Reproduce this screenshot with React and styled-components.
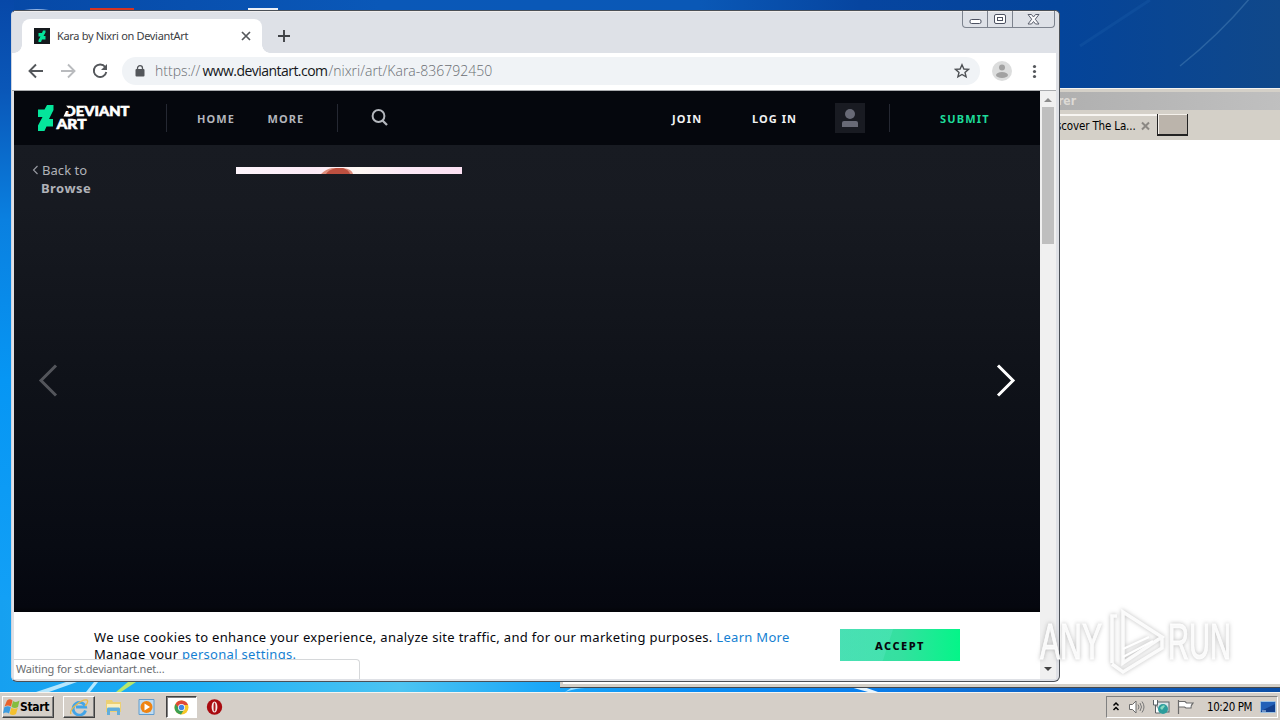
import React from 'react';
import styled, { createGlobalStyle } from 'styled-components';

const GlobalStyle = createGlobalStyle`
  * { box-sizing: border-box; }
  body { margin: 0; overflow: hidden; }
  svg { display: block; flex: none; }
`;

const uiFont = `'Noto Sans', 'Open Sans', sans-serif`;
const tahoma = `'DejaVu Sans Condensed', 'DejaVu Sans', sans-serif`;

/* ---------- desktop ---------- */

const Desktop = styled.div`
  position: relative;
  width: 1280px;
  height: 720px;
  overflow: hidden;
  font-family: ${uiFont};
  background:
    linear-gradient(90deg, #16a0f0 0, #1fb0f5 200px, #4cc4f2 400px, #1ca8f8 540px, #0a8cf4 700px, #0a80ee 860px, #0f62c4 1060px, #0b4ea6 1280px) 0 600px / 1280px 120px no-repeat,
    linear-gradient(180deg, #0748a8 0, #0a57b8 90px, #0a80e0 220px, #0696f4 380px, #12a0f6 600px) 0 0 / 14px 600px no-repeat,
    linear-gradient(90deg, #0648a6 0, #0a58b8 380px, #0a58b6 700px, #0645a0 860px, #04449a 1060px, #10488a 1280px);
`;

const Scenery = styled.svg`
  position: absolute;
  inset: 0;
`;

/* ---------- Internet Explorer window ---------- */

const IeWindow = styled.section`
  position: absolute;
  left: 560px;
  top: 88px;
  width: 724px;
  height: 600px;
  display: flex;
  flex-direction: column;
  background: #d4d0c8;
  border-top: 1px solid #f4f3f0;
  border-bottom: 1px solid #45484c;
`;

const IeTitle = styled.div`
  height: 18px;
  margin-top: 3px;
  padding-left: 498px;
  line-height: 18px;
  color: #dddad5;
  font: bold 12px/18px ${tahoma};
  background: linear-gradient(90deg, #a6a6a6, #b0b0b0 500px, #c0c0c0);
`;

const IeTabs = styled.div`
  display: flex;
  height: 30px;
  padding: 4px 0 0 340px;
  align-items: flex-start;
`;

const IeTab = styled.div`
  display: flex;
  align-items: center;
  width: 257px;
  height: 26px;
  padding: 0 0 4px 156px;
  border-top: 2px solid #f7f5f1;
  font: 11.5px ${tahoma};
  color: #000;
  gap: 6px;
  white-space: nowrap;
`;

const IeTabText = styled.span`
  width: 79px;
  letter-spacing: -0.15px;
`;

const IeNewTab = styled.div`
  width: 31px;
  height: 22px;
  border: 1px solid #222;
  border-top: 0;
  border-bottom-width: 2px;
  background: #bbb4ab;
  box-shadow: inset 1px 1px #f4f0ea;
`;

const IePage = styled.div`
  flex: 1;
  margin-bottom: 3px;
  background: #fff;
  border-left: 3px solid #d4d0c8;
`;

/* ---------- Chrome window ---------- */

const ChromeWindow = styled.section`
  position: absolute;
  left: 11px;
  top: 10px;
  width: 1049px;
  height: 672px;
  display: flex;
  flex-direction: column;
  padding: 0 3px 2px 2px;
  border: 1px solid #4b5057;
  border-left-color: #cdd3df;
  border-radius: 5px 5px 6px 6px;
  background: #dfe1e6;
  overflow: hidden;
`;

const TabStrip = styled.div`
  display: flex;
  flex: none;
  height: 42px;
  background: #dee1e7;
  box-shadow: inset 0 1px #f0eeee;
`;

const Tab = styled.div`
  position: relative;
  display: flex;
  align-items: center;
  width: 240px;
  height: 34px;
  margin: 8px 0 0 8px;
  padding: 0 11px 0 12px;
  border-radius: 8px 8px 0 0;
  background: #fff;
  &::before,
  &::after {
    content: '';
    position: absolute;
    bottom: 0;
    width: 8px;
    height: 8px;
  }
  &::before {
    left: -8px;
    background: radial-gradient(circle at 0 0, transparent 7.5px, #fff 8px);
  }
  &::after {
    right: -8px;
    background: radial-gradient(circle at 100% 0, transparent 7.5px, #fff 8px);
  }
`;

const TabTitle = styled.span`
  flex: 1;
  margin-left: 7px;
  font-size: 11px;
  line-height: 16px;
  letter-spacing: -0.32px;
  color: #3c4043;
  white-space: nowrap;
`;

const NewTab = styled.div`
  margin: 18px 0 0 15px;
`;

const WindowButtons = styled.div`
  display: flex;
  width: 93px;
  height: 17px;
  margin-left: auto;
  margin-right: 1px;
  border: 1px solid #7d838e;
  border-top: 0;
  border-radius: 0 0 4px 4px;
`;

const WindowButton = styled.div`
  display: flex;
  flex: ${(p) => p.$grow};
  align-items: center;
  justify-content: center;
  & + & { border-left: 1px solid #7d838e; }
`;

const Toolbar = styled.div`
  display: flex;
  flex: none;
  align-items: center;
  height: 38px;
  margin-left: -2px;
  padding: 0 12px 2px 15px;
  border-bottom: 1px solid #a9abae;
  background: #fff;
`;

const ToolbarIcon = styled.div`
  width: 18px;
  margin-right: ${(p) => p.$gap || 0}px;
`;

const Omnibox = styled.div`
  display: flex;
  align-items: center;
  width: 858px;
  height: 28px;
  padding: 0 10px 0 13px;
  border-radius: 14px;
  background: #f0f3f6;
`;

const Url = styled.span`
  flex: 1;
  margin-left: 10px;
  font: 300 14px 'Open Sans', ${uiFont};
  letter-spacing: 0;
  color: #6a6e73;
  white-space: nowrap;
`;

const Host = styled.span`
  margin: 0 1px 0 2px;
  color: #15171a;
  font-weight: 400;
  letter-spacing: -0.54px;
`;

const Avatar = styled.div`
  margin: 0 19px 0 12px;
`;

const Viewport = styled.div`
  position: relative;
  display: flex;
  flex: 1;
  min-height: 0;
`;

const Page = styled.main`
  display: flex;
  flex-direction: column;
  width: 1026px;
`;

const Scrollbar = styled.div`
  display: flex;
  flex-direction: column;
  align-items: center;
  width: 16px;
  padding: 6px 0 7px;
  background: #f0f0f0;
`;

const Thumb = styled.div`
  width: 12px;
  height: 137px;
  margin: 4px 0 auto;
  background: #bfbfbf;
`;

/* ---------- DeviantArt page ---------- */

const SiteHeader = styled.header`
  display: flex;
  flex: none;
  align-items: center;
  height: 54px;
  padding: 0 0 0 23px;
  background: #05070d;
`;

const Logo = styled.div`
  display: flex;
  width: 129px;
`;

const Divider = styled.i`
  width: 1px;
  height: 28px;
  margin-right: ${(p) => p.$after}px;
  background: #252832;
`;

const NavLink = styled.span`
  width: ${(p) => p.$w}px;
  padding-top: 1px;
  font-size: 11px;
  font-weight: 700;
  letter-spacing: ${(p) => p.$track || 1.1}px;
  color: ${(p) => p.$color || '#b3b5bb'};
  white-space: nowrap;
`;

const SearchIcon = styled.div`
  width: 301px;
  padding-bottom: 1px;
`;

const UserBox = styled.div`
  display: flex;
  align-items: center;
  justify-content: center;
  width: 30px;
  height: 30px;
  margin: 0 24px 0 0;
  background: #191b22;
`;

const Stage = styled.div`
  display: grid;
  grid-template-columns: 222px 1fr;
  grid-template-rows: 22px 1fr;
  flex: none;
  height: 467px;
  padding: 0 24px;
  background: linear-gradient(180deg, #181b22 0, #171a21 60px, #0f1219 235px, #080b13 400px, #05070f 462px, #030408 467px);
`;

const SideColumn = styled.div`
  grid-row: 1 / 3;
  display: flex;
  flex-direction: column;
  justify-content: space-between;
  padding: 16px 0 215px;
`;

const BackLink = styled.div`
  display: grid;
  grid-template-columns: 10px auto;
  margin-left: -6px;
  font-size: 13px;
  line-height: 18px;
  letter-spacing: 0.05px;
  color: #b0b2b8;
  b { grid-column: 2; margin-left: -1px; letter-spacing: 0.45px; }
`;

const BackChevron = styled.div`
  padding-top: 4px;
`;

const Artwork = styled.div`
  grid-column: 2;
  grid-row: 2;
  display: flex;
  justify-content: space-between;
  margin-left: -24px;
`;

const ArtStrip = styled.div`
  width: 226px;
  height: 7px;
  background: linear-gradient(90deg, #fdf4fb, #fbe9f5 35%, #fff8f4 55%, #fbe8f6 75%, #fbe0f2);
`;

const NextArrow = styled.div`
  padding-top: 196px;
`;

const CookieBar = styled.div`
  display: flex;
  flex: 1;
  padding: 17px 80px 0;
  background: #fff;
`;

const CookieText = styled.p`
  width: 746px;
  margin: 0;
  font-size: 13px;
  line-height: 17px;
  letter-spacing: 0.3px;
  color: #06070d;
  white-space: nowrap;
`;

const CookieLink = styled.span`
  color: #157fd2;
`;

const AcceptButton = styled.div`
  width: 120px;
  height: 32px;
  color: #06070d;
  font-size: 11px;
  font-weight: 800;
  letter-spacing: 1.5px;
  line-height: 34px;
  text-align: center;
  background:
    linear-gradient(108deg, rgba(100, 232, 205, 0.3) 0, rgba(100, 232, 205, 0.3) 50px, transparent 51px),
    linear-gradient(90deg, #3ddca8, #35e0a0 50%, #04f588);
`;

const StatusBubble = styled.div`
  position: absolute;
  left: 0;
  bottom: 0;
  width: 346px;
  height: 20px;
  padding-left: 2px;
  border: 1px solid #d6d8da;
  border-width: 1px 1px 0 0;
  border-radius: 0 4px 0 0;
  background: #fff;
  color: #6b6e72;
  font-size: 11px;
  letter-spacing: -0.17px;
  line-height: 18px;
`;

/* ---------- taskbar ---------- */

const Taskbar = styled.footer`
  position: absolute;
  left: 0;
  right: 0;
  bottom: 0;
  display: flex;
  align-items: flex-start;
  height: 28px;
  padding: 3px 2px 0 2px;
  border-top: 1px solid #f6f4f0;
  background: #d5cfc8;
`;

const TaskButton = styled.div`
  display: flex;
  align-items: center;
  justify-content: ${(p) => (p.$start ? 'flex-start' : 'center')};
  width: ${(p) => p.$w}px;
  height: 22px;
  margin-right: ${(p) => p.$gap || 0}px;
  border: 1px solid;
  border-color: ${(p) => (p.$pressed ? '#404040 #fff #fff #404040' : '#fff #404040 #404040 #fff')};
  box-shadow: ${(p) => (p.$pressed ? 'inset 1px 1px #808080' : 'inset -1px -1px #808080')};
  background: ${(p) => (p.$pressed ? '#fff' : 'transparent')};
  font: bold 12px ${tahoma};
  letter-spacing: -0.35px;
`;

const QuickIcon = styled.div`
  width: 18px;
  margin: 2px ${(p) => p.$gap}px 0 0;
`;

const Tray = styled.div`
  display: flex;
  align-items: center;
  width: 172px;
  height: 22px;
  margin-left: auto;
  padding: 0 1px 0 5px;
  border: 1px solid;
  border-color: #808080 #fff #fff #808080;
  gap: 7px;
`;

const Clock = styled.span`
  flex: 1;
  padding-left: 6px;
  font: 11.5px ${tahoma};
  letter-spacing: -0.4px;
  white-space: nowrap;
`;

const Watermark = styled.svg`
  position: absolute;
  left: 1034px;
  top: 604px;
  filter: drop-shadow(0 0 2px rgba(110, 110, 110, 0.5));
`;

/* ---------- drawings ---------- */

const SiteLogo = () => (
  <svg width="100" height="28" viewBox="0 0 100 28">
    <path fill="#05e59b" d="M16.500 1h-6.500L7.500 5.500H1V13h4.500L1 21.500V27h6.500l2-4.500H16V15h-4l4.500-9z" />
    <g fill="#fff" stroke="#fff" strokeWidth=".6" fontFamily="Lato, sans-serif" fontWeight="900" fontSize="14">
      <text x="27.500" y="12.300" textLength="65" lengthAdjust="spacingAndGlyphs">DEVIANT</text>
      <text x="19.500" y="25.200" textLength="30" lengthAdjust="spacingAndGlyphs">ART</text>
    </g>
    <path fill="#05070d" d="M25 0h3l4.500 6-3 4.500L28 14h-3l1-4z" />
    <path fill="#fff" d="M26.500 12.500l2.500-5.500h2.500l-1.500 3h3v2.500z" />
  </svg>
);

const Arrow = ({ flip, color }) => (
  <svg width="18" height="18" viewBox="0 0 18 18" transform={flip ? 'scale(-1 1)' : undefined}>
    <path d="M16 9H3M9 2.5 2.5 9 9 15.500" fill="none" stroke={color} strokeWidth="1.9" />
  </svg>
);

const PageArrow = ({ color, right }) => (
  <svg width="20" height="34" viewBox="0 0 20 34">
    <path d={right ? 'M2 2.500l15 15-15 15' : 'M18 2.500l-15 15 15 15'} fill="none" stroke={color} strokeWidth="3" />
  </svg>
);

function InternetExplorer() {
  return (
    <IeWindow>
      <IeTitle>rer</IeTitle>
      <IeTabs>
        <IeTab>
          <IeTabText>scover The La...</IeTabText>
          <svg width="10" height="10"><path d="M1 1.500l7 7m0-7l-7 7" stroke="#8b8883" strokeWidth="2" /></svg>
        </IeTab>
        <IeNewTab />
      </IeTabs>
      <IePage />
    </IeWindow>
  );
}

function BrowserTop() {
  return (
    <>
      <TabStrip>
        <Tab>
          <svg width="16" height="16">
            <path fill="#15191d" d="M0 0h16v16H0z" />
            <path fill="#05e59b" d="M11.500 2.500H9L8 5H4.500v3.500h2L4.500 12v2H7l1-2.500h3.500V8h-2l2-3.500z" />
          </svg>
          <TabTitle>Kara by Nixri on DeviantArt</TabTitle>
          <svg width="10" height="10"><path d="M1 1l8 8m0-8L1 9" stroke="#55585c" strokeWidth="1.7" /></svg>
        </Tab>
        <NewTab>
          <svg width="14" height="14"><path d="M7 1v12M1 7h12" stroke="#3f4246" strokeWidth="1.9" /></svg>
        </NewTab>
        <WindowButtons>
          <WindowButton $grow="0 0 24px">
            <svg width="13" height="11"><rect x="1" y="5.500" width="11" height="4" rx="1.500" fill="#fff" stroke="#4d5262" /></svg>
          </WindowButton>
          <WindowButton $grow="0 0 25px">
            <svg width="12" height="11" fill="#fff" stroke="#4d5262"><rect x=".5" y=".5" width="11" height="9" rx="1.500" /><rect x="3.500" y="3.500" width="5" height="3" /></svg>
          </WindowButton>
          <WindowButton $grow="1">
            <svg width="13" height="11"><path d="M1 .5h3.500l2 2.500 2-2.500H12L8.300 5.200 12 10H8.500l-2-2.500-2 2.500H1l3.700-4.800z" fill="#f8f8fa" stroke="#5a5f6d" /></svg>
          </WindowButton>
        </WindowButtons>
      </TabStrip>
      <Toolbar>
        <ToolbarIcon $gap={14}><Arrow color="#54575b" /></ToolbarIcon>
        <ToolbarIcon $gap={14}><Arrow flip color="#b9bbbe" /></ToolbarIcon>
        <ToolbarIcon $gap={13}>
          <svg width="18" height="18"><path d="M14.200 5A6.300 6.300 0 1 0 15.300 10" fill="none" stroke="#54575b" strokeWidth="1.900" /><path d="M16 2v6h-6z" fill="#54575b" /></svg>
        </ToolbarIcon>
        <Omnibox>
          <svg width="10" height="12"><rect x=".5" y="4" width="9" height="7.500" rx="1" fill="#54575b" /><path d="M2.500 5V3.200a2.500 2.500 0 0 1 5 0V5" fill="none" stroke="#54575b" strokeWidth="1.300" /></svg>
          <Url>https://<Host>www.deviantart.com</Host>/nixri/art/Kara-836792450</Url>
          <svg width="16" height="16"><path d="M8 1.800l1.900 4.200 4.600.4-3.500 3 1.100 4.500L8 11.500l-4.100 2.400L5 9.400l-3.500-3L6.100 6z" fill="none" stroke="#4f5256" strokeWidth="1.400" /></svg>
        </Omnibox>
        <Avatar>
          <svg width="20" height="20"><circle cx="10" cy="10" r="10" fill="#dcdddd" /><circle cx="10" cy="6.500" r="3" fill="#a2a2a2" /><ellipse cx="10" cy="14" rx="6" ry="3" fill="#a2a2a2" /></svg>
        </Avatar>
        <svg width="6" height="16" fill="#54575b"><circle cx="3.500" cy="3.500" r="1.600" /><circle cx="3.500" cy="8.500" r="1.600" /><circle cx="3.500" cy="13.500" r="1.600" /></svg>
      </Toolbar>
    </>
  );
}

function DeviantArt() {
  return (
    <Page>
      <SiteHeader>
        <Logo><SiteLogo /></Logo>
        <Divider $after={30} />
        <NavLink $w={70.5}>HOME</NavLink>
        <NavLink $w={69.5}>MORE</NavLink>
        <Divider $after={33} />
        <SearchIcon>
          <svg width="18" height="18"><circle cx="7.500" cy="7" r="5.900" fill="none" stroke="#b4b7bd" strokeWidth="2" /><path d="M11.500 11.500l4.500 4.500" stroke="#b4b7bd" strokeWidth="2.300" /></svg>
        </SearchIcon>
        <NavLink $w={80} $track={1.2} $color="#f1f2f4">JOIN</NavLink>
        <NavLink $w={83} $track={1.05} $color="#f1f2f4">LOG IN</NavLink>
        <UserBox>
          <svg width="18" height="20" fill="#686a76"><circle cx="9" cy="6" r="5" /><path d="M1 19v-4q0-2 2-2h12q2 0 2 2v4z" /></svg>
        </UserBox>
        <Divider $after={50} />
        <NavLink $w={52} $track={1.2} $color="#1edb99">SUBMIT</NavLink>
      </SiteHeader>
      <Stage>
        <SideColumn>
          <BackLink>
            <BackChevron><svg width="7" height="10"><path d="M5.500 1L1.500 5l4 4" fill="none" stroke="#9a9ca3" strokeWidth="1.100" /></svg></BackChevron>
            <span>Back to</span>
            <b>Browse</b>
          </BackLink>
          <PageArrow color="#53555b" />
        </SideColumn>
        <Artwork>
          <ArtStrip>
            <svg width="226" height="7"><path d="M85 7q5-5 11-6h11q9 1 10 6z" fill="#dd8d7c" /><path d="M90 7q2-4 10-6h7q6 2 7 6z" fill="#bd5040" /></svg>
          </ArtStrip>
          <NextArrow><PageArrow right color="#fff" /></NextArrow>
        </Artwork>
      </Stage>
      <CookieBar>
        <CookieText>
          We use cookies to enhance your experience, analyze site traffic, and for our marketing purposes. <CookieLink>Learn More</CookieLink>
          <br />
          Manage your <CookieLink>personal settings.</CookieLink>
        </CookieText>
        <AcceptButton>ACCEPT</AcceptButton>
      </CookieBar>
    </Page>
  );
}

function StartBar() {
  return (
    <Taskbar>
      <TaskButton $start $w={52} $gap={9}>
        <svg width="17" height="18" viewBox="0 0 17 18">
          <path d="M4 2.500q3-2.500 5.500 0L8 8.500q-3-2-6.500 0z" fill="#e8622c" /><path d="M10 3q3 2 6.500-.5L15 9q-3 2-6.500 0z" fill="#85bd3f" />
          <path d="M1.300 9.300q3.500-2 6.500 0L6 15.500q-3-2-6 0z" fill="#3d9ce0" /><path d="M8.300 9.800q3.500 2 6.500 0L13 16q-3 2-6.300 0z" fill="#f4c02e" />
        </svg>
        Start
      </TaskButton>
      <TaskButton $w={32} $gap={10}>
        <svg width="20" height="18" viewBox="0 0 20 18"><path d="M16.500 12.500A6.300 6.300 0 1 1 16.500 9H7" fill="none" stroke="#43a5e8" strokeWidth="2.800" /><path d="M2 16q-2-3 5-9T18 2q2 2-2 6" fill="none" stroke="#e9b94b" strokeWidth="1.300" /></svg>
      </TaskButton>
      <QuickIcon $gap={15}>
        <svg width="17" height="18" viewBox="0 0 17 18"><path d="M1 2h6l1 2h8v10H1z" fill="#ecd074" /><path d="M2 6h13v6H2z" fill="#fbf0bd" /><path d="M2 17v-6q0-1.500 1-1.500h11q1 0 1 1.500v6h-3v-4H5v4z" fill="#62aedb" /></svg>
      </QuickIcon>
      <QuickIcon $gap={10}>
        <svg width="17" height="18" viewBox="0 0 17 18"><path d="M1 1.500h15v15H1z" fill="#bfdcf2" stroke="#609dcf" /><circle cx="8.500" cy="9" r="6" fill="#ef8412" /><path d="M6.500 5.500L12 9l-5.500 3.500z" fill="#fff" /></svg>
      </QuickIcon>
      <TaskButton $w={31} $gap={9} $pressed>
        <svg width="15" height="15" viewBox="0 0 30 30"><circle cx="15" cy="15" r="14" fill="#f7c728" /><path d="M3 8a14 14 0 0 1 25 2H15l-6 8z" fill="#df4938" /><path d="M3 8a14 14 0 0 0 11 21l7-11-11-1z" fill="#3b9f53" /><circle cx="15" cy="15" r="7" fill="#fff" /><circle cx="15" cy="15" r="5.500" fill="#4285e5" /></svg>
      </TaskButton>
      <QuickIcon $gap={0}>
        <svg width="17" height="18" viewBox="0 0 17 18"><circle cx="8.500" cy="9" r="7.700" fill="#a90b10" /><ellipse cx="8.500" cy="9" rx="2.900" ry="5.600" fill="#f7eaea" /><ellipse cx="8.500" cy="9" rx="1" ry="4.600" fill="#b11a1d" /></svg>
      </QuickIcon>
      <Tray>
        <svg width="8" height="12"><path d="M1.500 4.500L4 2l2.500 2.500M1.500 9L4 6.500 6.500 9" fill="none" stroke="#000" strokeWidth="1.500" /></svg>
        <svg width="18" height="16"><path d="M2.500 5.500h3L9 2v12l-3.500-3.500h-3z" fill="#fff" stroke="#6b6b6b" /><path d="M11 5.500q2 2.500 0 5M13 4q3 4 0 8M15 2.500q4 5.500 0 11" fill="none" stroke="#777" /></svg>
        <svg width="18" height="16"><rect x="5" y="3" width="12" height="10" fill="#dce7ea" stroke="#5a6266" /><path d="M1.500 1v5h4V1M3.500 6v8h5" fill="#fff" stroke="#5a6266" /><circle cx="11" cy="10" r="5" fill="#2c9d9c" /><path d="M8 9q3-4 5-2l-3 4z" fill="#86d8c0" /></svg>
        <svg width="17" height="16"><path d="M1.500 1v14M2 2.500h6l1.500 1.500H16q-2 2-2 5H9L7.500 8H2" fill="#fff" stroke="#6b6b6b" strokeWidth="1.200" /></svg>
        <Clock>10:20 PM</Clock>
        <svg width="16" height="14"><rect x=".5" y="1.500" width="15" height="11" rx="1" fill="#2260b8" stroke="#9cc2e3" /><path d="M1 11L15 4v8H1z" fill="#123f8d" /><path d="M2 11h4" stroke="#cfe5fa" /></svg>
      </Tray>
    </Taskbar>
  );
}

export default function App() {
  return (
    <Desktop>
      <GlobalStyle />
      <Scenery width="1280" height="720">
        <path d="M24 10q13-2 25 0z" fill="#93b4e3" />
        <path d="M90 8h44v3H90z" fill="#d63422" />
        <path d="M248 8h30v3h-30z" fill="#edf1f7" />
        <path d="M1180 66Q1220 34 1250 -2" fill="none" stroke="#4780b6" strokeWidth="1.500" opacity=".5" />
        <path d="M1080 46L1150 0" stroke="#1455a3" strokeWidth="3" opacity=".5" />
        <path d="M36 692l30-10h11l-28 10z" fill="#dff6ff" opacity=".8" />
        <path d="M86 692l8-10h4l-8 10z" fill="#b8e9ff" />
        <path d="M116 692l12-10h8l-15 10z" fill="#b7e86d" />
        <path d="M565 692q12-4 20-4h-14z" fill="#9adbff" />
        <path d="M850 687h14l14 5h-10z" fill="#e6f5ff" />
      </Scenery>
      <InternetExplorer />
      <ChromeWindow>
        <BrowserTop />
        <Viewport>
          <DeviantArt />
          <Scrollbar>
            <svg width="8" height="6"><path d="M0 5l4-4 4 4z" fill="#8c8c8c" /></svg>
            <Thumb />
            <svg width="8" height="6"><path d="M0 1h8L4 5z" fill="#444" /></svg>
          </Scrollbar>
          <StatusBubble>Waiting for st.deviantart.net...</StatusBubble>
        </Viewport>
      </ChromeWindow>
      <Watermark width="214" height="74">
        <g fill="#fff" fillOpacity=".9" stroke="#fff" strokeWidth="1" strokeOpacity=".9" fontFamily="'Liberation Sans Narrow', 'Liberation Sans', sans-serif" fontSize="50">
          <text x="6" y="55" textLength="62" lengthAdjust="spacingAndGlyphs">ANY</text>
          <text x="134" y="55" textLength="63" lengthAdjust="spacingAndGlyphs">RUN</text>
        </g>
        <path d="M78 59V12h5M89 8l39 25-39 26zM78 60l11 8 39-24V33" fill="none" stroke="#fff" strokeWidth="3.500" strokeOpacity=".9" />
        <path d="M89 45l26-12M89 53l30-16" stroke="#fff" strokeWidth="2" />
      </Watermark>
      <StartBar />
    </Desktop>
  );
}
